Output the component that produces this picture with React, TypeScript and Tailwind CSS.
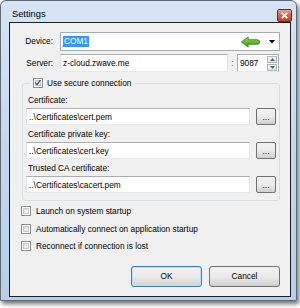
import React from 'react';

const font = { fontFamily: '"Liberation Sans", Arial, sans-serif' };

function CheckBox({ checked }: { checked?: boolean }) {
  return (
    <span className="relative w-[10px] h-[10px] shrink-0 border border-[#8e8f8f] bg-white">
      <span className="absolute inset-[1px] bg-gradient-to-br from-[#d9dadb] to-[#f6f6f6] border border-[#c9cacb]" />
      {checked && (
        <svg viewBox="0 0 10 10" className="absolute inset-0 w-[8px] h-[8px]">
          <path d="M1.5 4.5 L3.8 7 L8 1.5" fill="none" stroke="#3b4f86" strokeWidth="1.6" />
        </svg>
      )}
    </span>
  );
}

function CheckRow({ label, className = '' }: { label: string; className?: string }) {
  return (
    <div className={`flex items-center h-[12px] ml-[11px] ${className}`}>
      <CheckBox />
      <span className="ml-[5px] leading-[12px]">{label}</span>
    </div>
  );
}

function TextBox({ value, className = '' }: { value: string; className?: string }) {
  return (
    <div
      className={`h-[17px] bg-white border border-[#abadb3] border-l-[#e2e3ea] border-r-[#e2e3ea] border-b-[#e3e9ef] flex items-center pl-[2px] leading-[12px] ${className}`}
    >
      {value}
    </div>
  );
}

function BrowseButton() {
  return (
    <div className="w-[20px] h-[17px] ml-[6px] border border-[#707070] rounded-[2px] bg-gradient-to-b from-[#f2f2f2] via-[#ebebeb] to-[#cfcfcf] flex items-end justify-center pb-[3px] leading-[8px]">
      ...
    </div>
  );
}

function FileField({ label, value, className = '' }: { label: string; value: string; className?: string }) {
  return (
    <div className={className}>
      <div className="h-[10px] leading-[10px] pl-[2px]">{label}</div>
      <div className="flex items-center mt-[3px]">
        <TextBox value={value} className="w-[224px]" />
        <BrowseButton />
      </div>
    </div>
  );
}

export default function App() {
  return (
    <div className="w-[300px] h-[308px] bg-white text-[8.3px] text-black" style={font}>
      <div className="w-[297px] h-[301px] border border-[#626a73] rounded-t-[6px] bg-gradient-to-b from-[#d6e5f5] via-[#c2d7ee] to-[#b7cfe9] shadow-[2px_3px_4px_rgba(0,0,0,0.55)] flex flex-col">
        <div className="h-[21px] flex items-center justify-between pl-[11px] pr-[4px]">
          <span className="text-[9.3px] pt-[6px]">Settings</span>
          <div className="w-[15px] h-[13px] mt-[7px] border border-[#6e2a22] rounded-[2px] bg-gradient-to-b from-[#e8a493] via-[#d2624c] to-[#c0412c] flex items-center justify-center">
            <svg viewBox="0 0 8 8" className="w-[7px] h-[7px]">
              <path d="M1 1 L7 7 M7 1 L1 7" stroke="#ffffff" strokeWidth="2" />
            </svg>
          </div>
        </div>
        <div className="ml-[8px] mr-[5px] mb-[3px] flex-1 border border-[#1e1e1e] bg-[#f0f0f0] flex flex-col">
          {/* device */}
          <div className="flex items-center mt-[9px]">
            <span className="w-[43px] text-right">Device:</span>
            <div className="ml-[7px] w-[220px] h-[19px] bg-white border border-[#a3acb8] flex items-center pl-[2px] pr-[3px]">
              <span className="bg-[#3399ff] text-white px-[1px] leading-[11px]">COM1</span>
              <div className="flex-1" />
              <svg viewBox="0 0 22 13" className="w-[21px] h-[12px]">
                <defs>
                  <linearGradient id="g" x1="0" y1="0" x2="0" y2="1">
                    <stop offset="0" stopColor="#8fdc52" />
                    <stop offset="1" stopColor="#3c9a14" />
                  </linearGradient>
                </defs>
                <path d="M1 6.5 L8.5 1 L8.5 4 L18 4 Q21 4 21 6.5 Q21 9 18 9 L8.5 9 L8.5 12 Z" fill="url(#g)" stroke="#2c7a0c" strokeWidth="0.8" />
              </svg>
              <svg viewBox="0 0 6 4" className="w-[6px] h-[4px] ml-[8px] mr-[1px]">
                <path d="M0 0 L6 0 L3 3.5 Z" fill="#000" />
              </svg>
            </div>
          </div>
          {/* server */}
          <div className="flex items-center mt-[3px]">
            <span className="w-[43px] text-right">Server:</span>
            <TextBox value="z-cloud.zwave.me" className="ml-[7px] w-[168px] h-[18px]" />
            <span className="w-[9px] text-center text-[#8a5a8a]">:</span>
            <div className="w-[42px] h-[18px] bg-white border border-[#abadb3] border-b-[#e3e9ef] flex items-center pl-[2px]">
              <span className="flex-1">9087</span>
              <div className="flex flex-col w-[10px] mr-[1px] gap-[1px]">
                <div className="h-[7px] border border-[#b0b4bb] bg-gradient-to-b from-[#f7f7f7] to-[#e2e4e8] flex items-center justify-center">
                  <svg viewBox="0 0 5 3" className="w-[5px] h-[3px]"><path d="M0 3 L2.5 0 L5 3 Z" fill="#4d6185" /></svg>
                </div>
                <div className="h-[7px] border border-[#b0b4bb] bg-gradient-to-b from-[#f7f7f7] to-[#e2e4e8] flex items-center justify-center">
                  <svg viewBox="0 0 5 3" className="w-[5px] h-[3px]"><path d="M0 0 L5 0 L2.5 3 Z" fill="#4d6185" /></svg>
                </div>
              </div>
            </div>
          </div>
          {/* secure connection group */}
          <fieldset className="mt-[5px] ml-[12px] w-[258px] border border-[#d5dfe5] rounded-[3px] px-[3px] pb-[7px]">
            <legend className="ml-[4px] px-[3px] flex items-center h-[12px]">
              <CheckBox checked />
              <span className="ml-[4px] leading-[12px]">Use secure connection</span>
            </legend>
            <FileField label="Certificate:" value={'..\\Certificates\\cert.pem'} className="mt-[6px]" />
            <FileField label="Certificate private key:" value={'..\\Certificates\\cert.key'} className="mt-[4px]" />
            <FileField label="Trusted CA certificate:" value={'..\\Certificates\\cacert.pem'} className="mt-[4px]" />
          </fieldset>
          <CheckRow label="Launch on system startup" className="mt-[4px]" />
          <CheckRow label="Automatically connect on application startup" className="mt-[6px]" />
          <CheckRow label="Reconnect if connection is lost" className="mt-[5px]" />
          <div className="flex justify-end gap-[7px] mt-[14px] pr-[10px]">
            <div className="w-[71px] h-[21px] rounded-[3px] border border-[#3c7fb1] shadow-[inset_0_0_0_1px_#b8e3fa] bg-gradient-to-b from-[#f2f2f2] via-[#ebebeb] to-[#d3d3d3] flex items-center justify-center">
              OK
            </div>
            <div className="w-[71px] h-[21px] rounded-[3px] border border-[#707070] bg-gradient-to-b from-[#f2f2f2] via-[#ebebeb] to-[#cfcfcf] flex items-center justify-center">
              Cancel
            </div>
          </div>
        </div>
      </div>
    </div>
  );
}
